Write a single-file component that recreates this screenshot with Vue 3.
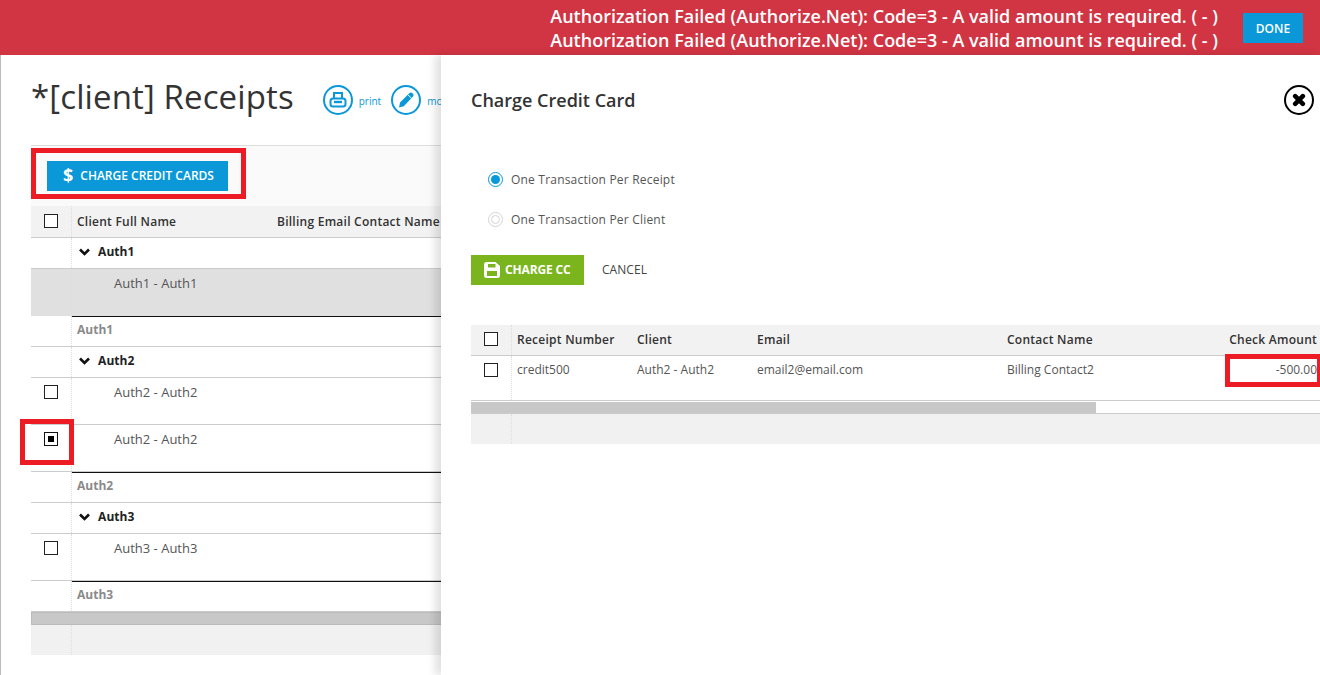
<template>
  <div class="app">
    <div class="alert-bar">
      <div class="alert-messages">
        <div v-for="(m, i) in messages" :key="i">{{ m }}</div>
      </div>
      <button class="done-btn">DONE</button>
    </div>

    <div class="page">
      <div class="page-head">
        <h1 class="page-title">*[client] Receipts</h1>
        <div class="head-actions">
          <span class="action">
            <span class="action-circle">
              <svg width="18" height="18" viewBox="0 0 18 18" fill="none" stroke="#0a98d8" stroke-width="2">
                <path d="M5 7V2h8v5" />
                <rect x="1.5" y="7.5" width="15" height="8" rx="2.5" />
                <path d="M5 11h8" stroke-width="2.4" />
              </svg>
            </span>
            <span class="action-label">print</span>
          </span>
          <span class="action">
            <span class="action-circle">
              <svg width="20" height="20" viewBox="0 0 20 20">
                <path fill="#0a98d8" d="M3 17.5l1-5L13.5 3c.8-.8 2-.8 2.7 0l.8.8c.8.8.8 2 0 2.7L7.8 16.2z" />
                <path stroke="#fff" stroke-width="1" d="M11.8 4.6l3.8 3.8" />
              </svg>
            </span>
            <span class="action-label">modify</span>
          </span>
        </div>
      </div>

      <div class="left-grid">
        <div class="toolbar">
          <div class="mark-box">
            <button class="charge-cards-btn"><span class="dollar">$</span>CHARGE CREDIT CARDS</button>
          </div>
        </div>

        <div class="row head-row">
          <div class="check-cell"><span class="check"></span></div>
          <div class="name-cell">Client Full Name</div>
          <div class="billing-cell">Billing Email Contact Name</div>
        </div>

        <template v-for="g in groups" :key="g.name">
          <div class="row group-row">
            <div class="check-cell"></div>
            <div class="name-cell">
              <svg class="chevron" width="11" height="8" viewBox="0 0 11 8" fill="none" stroke="#111" stroke-width="2.6">
                <path d="M1 1.5l4.5 4.5L10 1.5" />
              </svg>
              {{ g.name }}
            </div>
          </div>
          <div
            v-for="(r, i) in g.rows"
            :key="i"
            class="row item-row"
            :class="{ disabled: r.disabled }"
          >
            <div class="check-cell">
              <span v-if="!r.disabled" class="check" :class="{ checked: r.checked }"></span>
              <span v-if="r.checked" class="mark-check"></span>
            </div>
            <div class="item-name">{{ r.label }}</div>
          </div>
          <div class="row footer-row">
            <div class="check-cell"></div>
            <div class="footer-name">{{ g.name }}</div>
          </div>
        </template>

        <div class="scroll-track"></div>
        <div class="row grid-foot">
          <div class="check-cell"></div>
        </div>
      </div>
    </div>

    <div class="panel">
      <div class="panel-head">
        <h2 class="panel-title">Charge Credit Card</h2>
        <span class="close-icon">
          <svg width="14" height="14" viewBox="0 0 14 14" fill="none" stroke="#000" stroke-width="4.6" stroke-linecap="round">
            <path d="M3.2 3.2l7.6 7.6M10.8 3.2l-7.6 7.6" />
          </svg>
        </span>
      </div>

      <div class="radios">
        <label class="radio-line"><span class="radio on"></span>One Transaction Per Receipt</label>
        <label class="radio-line"><span class="radio off"></span>One Transaction Per Client</label>
      </div>

      <div class="panel-actions">
        <button class="charge-btn">
          <svg width="16" height="16" viewBox="0 0 16 16">
            <path fill="#fff" fill-rule="evenodd" d="M2.5 0h9L16 4v9.5A2.5 2.5 0 0 1 13.5 16h-11A2.5 2.5 0 0 1 0 13.5v-11A2.5 2.5 0 0 1 2.5 0zM4 2v3.5h7.5V2zM3 9v5h10V9z" />
          </svg>
          <span class="charge-label">CHARGE CC</span>
        </button>
        <span class="cancel">CANCEL</span>
      </div>

      <div class="cc-grid">
        <div class="cc-row cc-head">
          <div class="cc-check"><span class="check"></span></div>
          <div>Receipt Number</div>
          <div>Client</div>
          <div>Email</div>
          <div>Contact Name</div>
          <div class="cc-amount">Check Amount</div>
        </div>
        <div class="cc-row cc-body">
          <div class="cc-check"><span class="check"></span></div>
          <div>credit500</div>
          <div>Auth2 - Auth2</div>
          <div>email2@email.com</div>
          <div>Billing Contact2</div>
          <div class="cc-amount">-500.00<span class="mark-amount"></span></div>
        </div>
        <div class="cc-scroll"><div class="cc-thumb"></div></div>
        <div class="cc-foot"><div class="cc-check"></div></div>
      </div>
    </div>
  </div>
</template>

<script setup>
const messages = [
  'Authorization Failed (Authorize.Net): Code=3 - A valid amount is required. ( - )',
  'Authorization Failed (Authorize.Net): Code=3 - A valid amount is required. ( - )'
]

const groups = [
  { name: 'Auth1', rows: [{ label: 'Auth1 - Auth1', disabled: true }] },
  {
    name: 'Auth2',
    rows: [{ label: 'Auth2 - Auth2' }, { label: 'Auth2 - Auth2', checked: true }]
  },
  { name: 'Auth3', rows: [{ label: 'Auth3 - Auth3' }] }
]
</script>

<style>
html,
body {
  margin: 0;
  overflow: hidden;
  background: #fff;
}
</style>

<style scoped>
.app {
  position: relative;
  width: 1320px;
  height: 675px;
  overflow: hidden;
  font-family: 'Open Sans', 'Noto Sans', sans-serif;
  color: #333;
  background: #fff;
}

.alert-bar {
  height: 55px;
  box-sizing: border-box;
  display: flex;
  justify-content: flex-end;
  align-items: center;
  padding: 0 17px 0 0;
  background: #d13442;
  color: #fff;
}

.alert-messages {
  font-size: 18px;
  font-weight: 600;
  line-height: 24px;
  margin-right: 25px;
  padding-top: 1px;
  white-space: nowrap;
}

.done-btn {
  width: 60px;
  height: 30px;
  margin-top: 1px;
  padding: 0;
  border: none;
  background: #0a98d8;
  color: #fff;
  font: 600 12px 'Open Sans', sans-serif;
}

.page {
  height: 620px;
  box-sizing: border-box;
  padding-left: 31px;
  border-left: 1px solid #bbb;
}

.page-head {
  height: 90px;
  display: flex;
  align-items: flex-start;
  padding-top: 21px;
  box-sizing: border-box;
  margin-left: -1px;
}

.page-title {
  margin: 0;
  font-size: 33px;
  font-weight: 400;
  line-height: 42px;
  letter-spacing: 0.12px;
  color: #333;
  white-space: nowrap;
}

.head-actions {
  display: flex;
  gap: 10px;
  margin-left: 29px;
  margin-top: 9px;
}

.action {
  display: flex;
  align-items: center;
  gap: 6px;
}

.action-circle {
  width: 30px;
  height: 30px;
  box-sizing: border-box;
  border: 2px solid #0a98d8;
  border-radius: 50%;
  display: flex;
  align-items: center;
  justify-content: center;
}

.action-label {
  font-size: 10px;
  color: #0a98d8;
  padding-top: 2px;
}

.left-grid {
  width: 1000px;
  margin-left: -1px;
}

.toolbar {
  height: 61px;
  box-sizing: border-box;
  border-top: 1px solid #ddd;
  background: #fafafa;
  padding-top: 2px;
}

.mark-box {
  width: 215px;
  height: 51px;
  box-sizing: border-box;
  border: 5px solid #ed1c24;
  padding: 8px 0 0 11px;
}

.charge-cards-btn {
  width: 181px;
  height: 30px;
  padding: 0 0 2px 16px;
  display: flex;
  align-items: center;
  border: none;
  background: #0a98d8;
  color: #fff;
  font: 600 12px 'Open Sans', sans-serif;
}

.dollar {
  font-size: 18px;
  font-weight: 700;
  margin-right: 7px;
}

.row {
  display: flex;
  box-sizing: border-box;
  border-bottom: 1px solid #ccc;
}

.check-cell {
  position: relative;
  width: 41px;
  flex: none;
  box-sizing: border-box;
  border-right: 1px dotted #ddd;
}

.check {
  display: block;
  box-sizing: border-box;
  width: 14px;
  height: 14px;
  margin-left: 13px;
  border: 1px solid #222;
  background: #fff;
}

.check.checked {
  border-color: #111;
  position: relative;
}

.check.checked::after {
  content: '';
  position: absolute;
  left: 3px;
  top: 3px;
  width: 6px;
  height: 6px;
  background: #000;
}

.mark-check {
  position: absolute;
  left: -11px;
  top: -6px;
  width: 54px;
  height: 46px;
  box-sizing: border-box;
  border: 5px solid #ed1c24;
}

.head-row {
  height: 32px;
  background: #f2f2f2;
  font-size: 12px;
  font-weight: 600;
  align-items: stretch;
  line-height: 32px;
  letter-spacing: 0.25px;
}

.head-row .check {
  margin-top: 8px;
}

.name-cell {
  width: 205px;
  padding-left: 5px;
  box-sizing: border-box;
  white-space: nowrap;
}

.billing-cell {
  white-space: nowrap;
}

.group-row {
  height: 31px;
  font-size: 12px;
  font-weight: 700;
  color: #222;
  line-height: 28px;
}

.chevron {
  margin: 0 5px 0 2px;
}

.item-row {
  height: 47px;
  font-size: 13px;
  color: #555;
}

.item-row .check {
  margin-top: 7px;
}

.item-row.disabled {
  background: #e0e0e0;
  border-bottom: none;
}

.item-name {
  flex: 1;
  padding: 5px 0 0 42px;
  line-height: 18px;
}

.footer-row {
  position: relative;
  height: 31px;
  font-size: 12px;
  font-weight: 700;
  color: #8a8a8a;
  line-height: 27px;
}

.footer-row::before {
  content: '';
  position: absolute;
  left: 41px;
  right: 0;
  top: 0;
  height: 1px;
  background: #111;
}

.footer-name {
  padding-left: 5px;
}

.scroll-track {
  height: 13px;
  box-sizing: border-box;
  background: #c8c8c8;
  border: 1px solid #bbb;
}

.grid-foot {
  height: 30px;
  background: #f1f1f1;
  border-bottom: none;
}

.panel {
  position: absolute;
  left: 441px;
  top: 55px;
  right: 0;
  bottom: 0;
  background: #fff;
  box-shadow: -6px 0 8px rgba(0, 0, 0, 0.12);
  padding-left: 30px;
}

.panel-head {
  height: 90px;
  display: flex;
  align-items: flex-start;
  justify-content: space-between;
  padding: 30px 6px 0 0;
  box-sizing: border-box;
}

.panel-title {
  margin: 0;
  font-size: 18px;
  font-weight: 600;
  line-height: 30px;
  color: #333;
}

.close-icon {
  width: 30px;
  height: 30px;
  box-sizing: border-box;
  border: 2px solid #000;
  border-radius: 50%;
  display: flex;
  align-items: center;
  justify-content: center;
}

.radios {
  display: flex;
  flex-direction: column;
  gap: 20px;
  padding-left: 17px;
  margin-top: 24px;
}

.radio-line {
  display: flex;
  align-items: center;
  height: 20px;
  font-size: 12px;
  color: #555;
  letter-spacing: 0.2px;
}

.radio {
  width: 15px;
  height: 15px;
  box-sizing: border-box;
  border-radius: 50%;
  margin-right: 8px;
  position: relative;
  border: 1.5px solid #0a98d8;
}

.radio::after {
  content: '';
  position: absolute;
  inset: 2px;
  border-radius: 50%;
  background: #0a98d8;
}

.radio.off {
  border-color: #d4d4d4;
}

.radio.off::after {
  background: #fff;
  border: 1.5px solid #d4d4d4;
}

.panel-actions {
  display: flex;
  align-items: center;
  margin-top: 26px;
}

.charge-btn {
  width: 113px;
  height: 30px;
  display: flex;
  align-items: center;
  gap: 5px;
  padding: 0 0 0 13px;
  border: none;
  background: #7ab51d;
  color: #fff;
  font: 700 12px 'Open Sans', sans-serif;
  letter-spacing: -0.15px;
}

.charge-label {
  padding-bottom: 2px;
}

.cancel {
  margin: 0 0 2px 18px;
  font-size: 12px;
  color: #444;
  letter-spacing: 0.05px;
}

.cc-grid {
  margin-top: 40px;
  width: 849px;
}

.cc-row {
  display: grid;
  grid-template-columns: 41px 120px 120px 250px 1fr 200px;
  box-sizing: border-box;
  border-bottom: 1px solid #ccc;
  font-size: 12px;
}

.cc-row > div:not(.cc-check) {
  padding-left: 5px;
  white-space: nowrap;
  position: relative;
}

.cc-check {
  border-right: 1px dotted #ddd;
  box-sizing: border-box;
}

.cc-check .check {
  margin: 7px 0 0 13px;
}

.cc-head {
  height: 31px;
  background: #f2f2f2;
  font-weight: 600;
  line-height: 29px;
  letter-spacing: 0.25px;
}

.cc-body {
  height: 45px;
  color: #555;
  line-height: 28px;
}

.cc-row > .cc-amount {
  text-align: right;
  padding-right: 3px;
}

.mark-amount {
  position: absolute;
  top: -2px;
  right: 0;
  width: 95px;
  height: 33px;
  box-sizing: border-box;
  border: 5px solid #ed1c24;
  border-right-width: 3px;
}

.cc-scroll {
  height: 13px;
  box-sizing: border-box;
  padding-top: 1px;
  border-bottom: 1px solid #ccc;
}

.cc-thumb {
  width: 625px;
  height: 11px;
  background: #c8c8c8;
}

.cc-foot {
  height: 30px;
  background: #f1f1f1;
}

.cc-foot .cc-check {
  width: 41px;
  height: 100%;
}
</style>
